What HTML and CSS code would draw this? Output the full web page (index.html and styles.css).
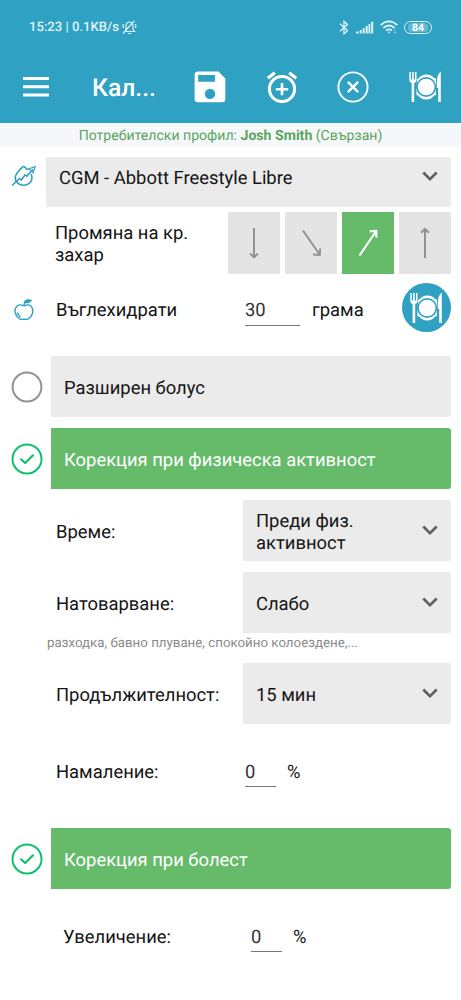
FILE: index.html
```html
<!DOCTYPE html>
<html lang="bg">
<head>
<meta charset="utf-8">
<title>Калкулатор</title>
<link rel="stylesheet" href="styles.css">
</head>
<body>
<svg class="defs" width="0" height="0" aria-hidden="true">
  <symbol id="plate" viewBox="0 0 32 32">
    <path d="M0.3 1V9Q0.3 11.5 2.6 12V31H5.2V12Q7.5 11.5 7.5 9V1H6V8.5H4.7V1H3.1V8.5H1.8V1Z" fill="currentColor"/>
    <path d="M31.8 0.5V31H29.2V17H27.8V12Q28 3 31.8 0.5Z" fill="currentColor"/>
    <path d="M8.2 7.8H9.2A10 10 0 0 1 25.3 7.2H27V24.3H25.4A10 10 0 0 1 9 24.3H7.4V20Z" fill="currentColor"/>
    <circle cx="17.2" cy="16" r="9.2" fill="currentColor" stroke="#2fa1c2" stroke-width="1.7"/>
  </symbol>
  <symbol id="chevron" viewBox="0 0 16 10"><path d="M1.3 1.5L8 8.2L14.7 1.5" fill="none" stroke="#606060" stroke-width="2.6"/></symbol>
  <symbol id="check" viewBox="0 0 32 32"><circle cx="16" cy="16" r="14.5" fill="none" stroke="#09c269" stroke-width="2"/><path d="M10 16.3L14.2 20L22 12.3" fill="none" stroke="#09c269" stroke-width="2.1" stroke-linecap="round" stroke-linejoin="round"/></symbol>
</svg>
<header class="header">
  <div class="status">
    <span class="clock">15:23 | 0.1KB/s</span>
    <svg class="bell" width="15" height="15" viewBox="0 0 15 15" fill="none" stroke="#e2f3f8" stroke-width="1.2"><path d="M3 11.5H12.5L11 9.5V5.5Q10.5 2 7.5 2Q4.5 2 4 5.5V9.5L3 11.5M6 13.5H9M1 13.5L12.5 .7M1.6 4Q.5 6 1.6 8M13.3 4Q14.5 6 13.3 8"/></svg>
    <span class="spacer"></span>
    <svg class="bt" width="10" height="15" viewBox="0 0 10 15" fill="none" stroke="#e2f3f8" stroke-width="1.3"><path d="M1 3.8L8.5 10.5L5 13.8V1.2L8.5 4.5L1 11.2"/></svg>
    <svg class="signal" width="18" height="13" viewBox="0 0 18 13" fill="#e2f3f8"><path d="M0 10.5H2.5V12.5H0ZM3.7 9H5.7V12.5H3.7ZM6.7 7.2H8.7V12.5H6.7ZM9.7 5H11.7V12.5H9.7ZM12.5 3H14.3V12.5H12.5ZM15.2 .7H17.2V12.5H15.2Z"/></svg>
    <svg class="wifi" width="18" height="14" viewBox="0 0 18 14" fill="none" stroke="#e2f3f8" stroke-width="1.8"><path d="M.7 5Q9-2.2 17.3 5M3.4 8Q9 3 14.6 8M6 10.6Q9 8.2 12 10.6"/><path d="M7.5 11.8L9 13.5L10.5 11.8Z" fill="#e2f3f8" stroke="none"/><path d="M15 9.5V13M13.8 12L15 13.3L16.2 12" stroke-width=".8" opacity=".6"/></svg>
    <span class="battery"><span>84</span></span>
  </div>
  <nav class="toolbar">
    <svg class="menu" width="26" height="22" viewBox="0 0 26 22" fill="#fff"><path d="M0 1H26V4H0ZM0 9.3H26V12.3H0ZM0 17.6H26V20.6H0Z"/></svg>
    <h1>Кал...</h1>
    <svg class="save" width="32" height="32" viewBox="0 0 32 32"><path fill="#fff" fill-rule="evenodd" d="M4 .5H24.5L31.3 7.5V28Q31.3 31.3 28 31.3H4Q.6 31.3 .6 28V4Q.6 .5 4 .5ZM4.2 4V10.7H21V4ZM16 17.7A5.2 5.2 0 1 0 16 28.1A5.2 5.2 0 1 0 16 17.7Z"/></svg>
    <svg class="alarm" width="32" height="32" viewBox="0 0 32 32" fill="none" stroke="#fff" stroke-width="3"><circle cx="16" cy="18" r="12.6"/><path d="M16 12V24.3M9.8 18.2H22.2" stroke-width="2.6"/><path d="M1.8 7.2L8.8 1.7M30.2 7.2L23.2 1.7" stroke-width="3.2"/></svg>
    <svg class="close" width="32" height="32" viewBox="0 0 32 32" fill="none" stroke="#fff"><circle cx="16" cy="16" r="14.6" stroke-width="1.9"/><path d="M11.6 11.6L20.4 20.4M20.4 11.6L11.6 20.4" stroke-width="2.5" stroke-linecap="round"/></svg>
    <svg class="meal" width="32" height="32"><use href="#plate"/></svg>
  </nav>
</header>
<div class="profile">Потребителски профил: <b>Josh Smith</b> (Свързан)</div>
<main>
  <section class="row source">
    <svg class="drop" width="26" height="22" viewBox="0 0 26 22" fill="none" stroke="#2fa1c2" stroke-width="1.6"><path d="M12.6 1.2Q4.2 8.5 4.2 13A8.4 7.2 0 0 0 21 13Q21 11 20 9M12.6 1.2Q15 3 16.6 5"/><path d="M1 20.5L8.5 13.5L10.3 15L14 9.8L15.8 11.2L22 4.2"/><path d="M17 4L24.2 1.7L22.2 8L20.7 5.7Z" stroke-width="1.1"/></svg>
    <div class="select">CGM - Abbott Freestyle Libre<svg class="chev" width="16" height="10"><use href="#chevron"/></svg></div>
  </section>
  <section class="row trend">
    <label>Промяна на кр. захар</label>
    <div class="arrows">
      <div class="arrow"><svg width="52" height="62" viewBox="0 0 52 62"><path d="M26 16V45M22 41.5L26 45.3L30 41.5"/></svg></div>
      <div class="arrow"><svg width="52" height="62" viewBox="0 0 52 62"><path d="M18 18.5L35 43M28 42.5L34.8 43L35.2 36.5"/></svg></div>
      <div class="arrow on"><svg width="52" height="62" viewBox="0 0 52 62"><path d="M17.5 43.5L34.2 19M27.7 19.3L34.2 19L34.5 25.5"/></svg></div>
      <div class="arrow"><svg width="52" height="62" viewBox="0 0 52 62"><path d="M26 46V17M22 20.8L26 17L30 20.8"/></svg></div>
    </div>
  </section>
  <section class="row carbs">
    <svg class="apple" width="20" height="22" viewBox="0 0 20 22" fill="none" stroke="#2fa1c2" stroke-width="1.4"><path d="M10 7Q6 4.8 3.2 7Q.2 9.6 1.3 13.8Q2.4 18 5.8 19.8Q7.4 20.6 10 20.2Q12.6 20.6 14.2 19.8Q17.6 18 18.6 13.8Q19.5 9.6 16.8 7Q14 4.8 10 7ZM10 7Q10 5 10.8 3.5M3.5 13.5Q4.2 16.2 6.5 18"/><path d="M10.5 3Q12.5-.3 17 1.5Q14.5 4.8 10.5 3Z" fill="#2fa1c2"/></svg>
    <label>Въглехидрати</label><span class="field wide">30</span><span class="unit">грама</span>
    <div class="meal-button"><svg width="32" height="32"><use href="#plate"/></svg></div>
  </section>
  <section class="row option extended"><svg width="32" height="32" viewBox="0 0 32 32"><circle cx="16" cy="16" r="14.4" fill="none" stroke="#929292" stroke-width="2"/></svg><div class="bar">Разширен болус</div></section>
  <section class="row option activity"><svg width="32" height="32"><use href="#check"/></svg><div class="bar green">Корекция при физическа активност</div></section>
  <section class="row setting"><label>Време:</label><div class="dropdown"><span>Преди физ.<br>активност</span><svg class="chev" width="16" height="10"><use href="#chevron"/></svg></div></section>
  <section class="row setting"><label>Натоварване:</label><div class="dropdown"><span>Слабо</span><svg class="chev" width="16" height="10"><use href="#chevron"/></svg></div></section>
  <p class="hint">разходка, бавно плуване, спокойно колоездене,...</p>
  <section class="row setting duration"><label>Продължителност:</label><div class="dropdown"><span>15 мин</span><svg class="chev" width="16" height="10"><use href="#chevron"/></svg></div></section>
  <section class="row percent"><label>Намаление:</label><span class="field">0</span><span class="unit">%</span></section>
  <section class="row option illness"><svg width="32" height="32"><use href="#check"/></svg><div class="bar green">Корекция при болест</div></section>
  <section class="row percent increase"><label>Увеличение:</label><span class="field">0</span><span class="unit">%</span></section>
</main>
</body>
</html>
```
FILE: styles.css
```css
* { box-sizing: border-box; }
body { margin: 0; width: 461px; height: 1000px; overflow: hidden; background: #fff; color: #151515; font: 18.4px/22px Roboto, sans-serif; text-rendering: geometricPrecision; }
svg { display: block; flex: none; }
.defs { position: absolute; }
.header { height: 123px; background: #2fa1c2; color: #fff; }
.status { display: flex; align-items: center; height: 52px; padding: 2px 29px 0 29px; }
.clock { padding-top: 2px; font-size: 13.1px; font-weight: 500; color: #e2f3f8; }
.bell { margin-left: 3px; }
.spacer { flex: 1; }
.bt { margin-right: 7px; }
.signal { margin-right: 6px; }
.wifi { margin-right: 6px; }
.battery { display: flex; align-items: center; justify-content: center; width: 28px; height: 13px; border: 1.4px solid #e2f3f8; border-radius: 7px; }
.battery span { width: 20px; background: #65b9d1; border-radius: 4px; text-align: center; font-size: 10.5px; line-height: 9px; font-weight: 700; color: #fff; }
.toolbar { display: flex; align-items: center; height: 70px; padding-left: 23px; }
h1 { width: 102px; margin: 3px 0 0 43px; font-size: 24.7px; line-height: 30px; font-weight: 500; }
.alarm, .close, .meal { margin-left: 40px; }
.close { margin-left: 39px; }
.profile { height: 24px; padding-top: 1px; background: #f6f7fa; color: #58a65c; text-align: center; font-size: 14.1px; line-height: 25px; }
main { padding-top: 10px; }
.row { display: flex; width: 451px; }
.source { height: 50px; }
.drop { margin: 8px 9px 0 11px; }
.select { display: flex; flex: 1; justify-content: space-between; height: 50px; padding: 11px 13px 0; background: #ebebeb; border-radius: 0 3px 3px 0; }
.select .chev { margin-top: 3px; }
.trend { height: 62px; margin-top: 5px; padding-left: 55px; justify-content: space-between; }
.trend label { width: 150px; padding-top: 11px; }
.arrows { display: grid; grid-template-columns: repeat(4, 52px); gap: 5px; }
.arrow { background: #e4e4e4; }
.arrow path { fill: none; stroke: #929292; stroke-width: 2; }
.arrow.on { background: #66bb6a; }
.arrow.on path { stroke: #fff; stroke-width: 2.2; }
.carbs { height: 49px; margin-top: 9px; align-items: center; padding-left: 14px; }
.apple { margin: 4px 22px 0 0; }
.carbs label { width: 189px; padding-top: 7px; }
.field { width: 31px; height: 27px; border-bottom: 1.5px solid #777; color: #333; }
.field.wide { width: 55px; margin-top: 9px; padding-top: 1px; }
.carbs .unit { margin-left: 12px; padding-top: 7px; }
.meal-button { display: flex; width: 49px; height: 49px; margin-left: auto; padding-right: 1px; align-items: center; justify-content: center; border-radius: 50%; background: #2fa1c2; color: #fff; }
.option { height: 61px; align-items: center; padding-left: 11px; }
.extended { margin-top: 24px; }
.activity { margin: 11px 0; }
.bar { display: flex; flex: 1; align-items: center; height: 61px; margin-left: 8px; padding: 4px 13px 0; background: #ebebeb; border-radius: 0 3px 3px 0; }
.bar.green { background: #66bb6a; color: #fff; }
.setting { height: 61px; align-items: center; padding-left: 56px; margin-bottom: 11px; }
.setting label { width: 187px; padding-top: 4px; }
.dropdown { display: flex; flex: 1; height: 61px; align-items: center; justify-content: space-between; padding: 4px 13px 0; background: #ebebeb; border-radius: 0 3px 3px 0; }
.dropdown .chev { margin-top: -6px; }
.hint { margin: -11px 0 0 47px; height: 30px; font-size: 13.3px; line-height: 22px; color: #8a8a8a; }
.percent { padding-left: 56px; margin-top: 37px; }
.percent label { width: 189px; padding-top: 1px; }
.percent .unit { margin-left: 11px; padding-top: 1px; }
.percent .field { height: 26px; padding-top: 1px; }
.illness { margin-top: 41px; }
.increase { padding-left: 63px; }
.increase label { width: 188px; }
```
